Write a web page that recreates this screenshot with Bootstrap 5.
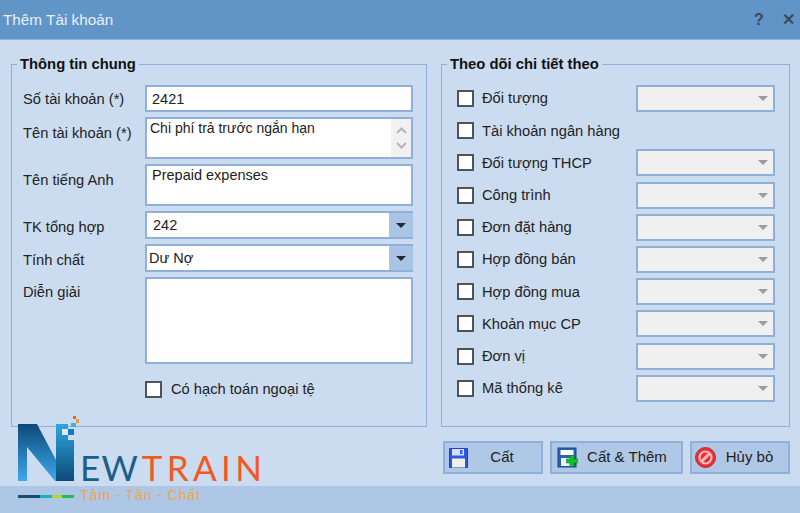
<!DOCTYPE html>
<html lang="vi">
<head>
  <meta charset="UTF-8" />
  <title>Thêm Tài khoản</title>
  <link href="https://cdn.jsdelivr.net/npm/bootstrap@5.3.0/dist/css/bootstrap.min.css" rel="stylesheet">
  <style>
    html, body { height: 100%; }
    body {
      width: 800px; height: 513px; overflow: hidden; margin: 0;
      background: #cbdcf0; color: #222;
      font-family: "Liberation Sans", Arial, sans-serif; font-size: 14.7px;
      position: relative;
    }
    .title-strip { height: 40px; background: #6195c8; border-bottom: 1px solid #8fb3da; color: #e8f0f8; font-size: 15.3px; padding: 1px 0 0 3px; gap: 5px; }
    .title-btn { font-weight: 700; color: #3d4a58; font-size: 16px; width: 24px; text-align: center; }
    .work-area { height: 446px; padding: 13px 10px 0 11px; gap: 14px; }
    .group-box {
      border: 1.5px solid #8fb0d8; margin: 0; padding: 0 11px; height: 374px; min-width: 0;
    }
    .left-box { width: 416px; }
    .right-box { width: 349px; padding: 0 14px 0 15px; }
    .group-box legend {
      float: none; width: auto; margin: 0 0 0 -6px; padding: 0 3px;
      font-size: 14.8px; font-weight: 700; line-height: 22px; color: #111;
    }
    .right-box legend { margin-left: -10px; }
    .field-grid { display: grid; grid-template-columns: 122px 268px; row-gap: 5px; margin-top: 10px; }
    .field-grid label { margin: 0; padding-top: 5px; }
    .field-grid label.first-label { padding-top: 3px; }
    .field-grid label.last-label { padding-top: 4px; }
    .win-input, .win-input:disabled {
      border: 2px solid #8fb0d8; border-radius: 0; padding: 0 5px; height: 27px;
      font-size: 14.5px; color: #222; background: #fff; box-shadow: none; font-family: inherit;
    }
    .win-area { height: 42px; resize: none; padding: 0 5px; line-height: 18px; overflow: hidden; }
    .tall-area { height: 87px; }
    .scroll-wrap { border: 2px solid #8fb0d8; background: #fff; height: 42px; }
    .scroll-wrap textarea { border: 0; flex: 1; height: 38px; padding: 0 3px; font-size: 14px; line-height: 18px; resize: none; outline: 0; color: #222; overflow: hidden; font-family: inherit; }
    .scroll-strip { width: 20px; background: #f1f1f1; }
    .combo-arrow {
      width: 24px; background: #a9c4e4; border: 0; border-radius: 0; padding: 0; justify-content: center;
    }
    .combo-tri { width: 0; height: 0; border-left: 5px solid transparent; border-right: 5px solid transparent; border-top: 5px solid #1c2a3a; }
    .win-combo { height: 28px; border: 2px solid #8fb0d8; border-right: 0; background: #fff; }
    .win-combo input { border: 0; flex: 1; min-width: 0; padding: 2px 6px 0; font-size: 14.5px; color: #222; outline: 0; background: transparent; font-family: inherit; }
    .win-combo input.tight-text { padding: 2px 2px 0; }
    .off-combo { height: 27px; width: 139px; background: #f0f0f0; border-right: 2px solid #8fb0d8; }
    .off-combo .combo-arrow { background: transparent; width: 20px; }
    .off-combo .combo-tri { border-top-color: #9c9c9c; }
    .win-check {
      width: 17px; height: 17px; margin: 0; border: 2px solid #4e5358; border-radius: 0; background: #fff;
      appearance: none; flex: none;
    }
    .ngoai-te { margin: 14px 0 0 122px; gap: 9px; }
    .track-list { margin-top: 10px; row-gap: 5.2px; }
    .track-row { height: 27px; }
    .track-name { margin-left: 8px; flex: 1; }
    .cmd-row { gap: 7px; padding-left: 2px; margin-top: 14px; }
    .cmd-btn {
      height: 33px; background: #aec8e6; border: 2px solid #8fb0d8; border-radius: 0; color: #222;
      font-size: 15px; padding: 0 5px 0 4px; display: flex; align-items: center;
    }
    .cmd-btn:hover { background: #aec8e6; border-color: #8fb0d8; color: #222; }
    .cmd-btn span { flex: 1; text-align: center; }
    .btn-cat, .btn-huy { width: 100px; }
    .btn-huy { padding-left: 3px; }
    .btn-them { width: 133px; padding-left: 5px; }
    .bottom-band { height: 27px; background: #aec7e6; }
    .brand-logo { position: absolute; left: 18px; top: 415px; width: 250px; height: 92px; }
    .brand-word { position: absolute; left: 62px; top: 32px; font-family: "Lato", sans-serif; font-size: 35px; line-height: 40px; letter-spacing: 1.2px; white-space: nowrap; }
    .brand-ew { color: #1b5f8c; }
    .brand-tr { color: #f2591f; margin-left: 3px; letter-spacing: 4.3px; }
    .brand-tag { position: absolute; left: 62px; top: 71px; color: #f0a54a; font-size: 14px; letter-spacing: .9px; line-height: 18px; white-space: nowrap; }
    .brand-rule { position: absolute; left: 0; top: 80px; width: 56px; height: 3px; background: linear-gradient(90deg, #17506f 0 40%, #17b0c0 40% 60%, #b8d62a 60% 78%, #1fc050 78%); }
  </style>
</head>
<body>
  <div class="title-strip d-flex align-items-center">
    <div class="flex-grow-1">Thêm Tài khoản</div>
    <div class="title-btn">?</div>
    <div class="title-btn">✕</div>
  </div>

  <div class="work-area d-flex">
    <fieldset class="group-box left-box">
      <legend>Thông tin chung</legend>
      <div class="field-grid">
        <label class="first-label">Số tài khoản (*)</label>
        <input class="form-control win-input" value="2421">
        <label>Tên tài khoản (*)</label>
        <div class="scroll-wrap d-flex">
          <textarea>Chi phí trả trước ngắn hạn</textarea>
          <div class="scroll-strip d-flex flex-column align-items-center justify-content-around py-1">
            <svg width="11" height="7" viewBox="0 0 11 7"><path d="M1 6 5.5 1.5 10 6" fill="none" stroke="#b5b5b5" stroke-width="2"/></svg>
            <svg width="11" height="7" viewBox="0 0 11 7"><path d="M1 1 5.5 5.5 10 1" fill="none" stroke="#b5b5b5" stroke-width="2"/></svg>
          </div>
        </div>
        <label>Tên tiếng Anh</label>
        <textarea class="form-control win-input win-area">Prepaid expenses</textarea>
        <label>TK tổng hợp</label>
        <div class="input-group win-combo flex-nowrap">
          <input value="242">
          <span class="input-group-text combo-arrow"><i class="combo-tri"></i></span>
        </div>
        <label>Tính chất</label>
        <div class="input-group win-combo flex-nowrap">
          <input class="tight-text" value="Dư Nợ">
          <span class="input-group-text combo-arrow"><i class="combo-tri"></i></span>
        </div>
        <label class="last-label">Diễn giải</label>
        <textarea class="form-control win-input win-area tall-area"></textarea>
      </div>
      <div class="d-flex align-items-center ngoai-te">
        <input type="checkbox" class="win-check">
        <span>Có hạch toán ngoại tệ</span>
      </div>
    </fieldset>

    <div>
      <fieldset class="group-box right-box">
        <legend>Theo dõi chi tiết theo</legend>
        <div class="d-grid track-list" id="trackList"></div>
      </fieldset>
      <div class="d-flex cmd-row">
        <button class="btn cmd-btn btn-cat">
          <svg width="19" height="20" viewBox="0 0 19 20"><path d="M.5.5h18v19H.5z" fill="#2f55e8" stroke="#2140c8"/><rect x="3" y="1" width="12" height="6.500" fill="#d5def5"/><rect x="11" y="2" width="2.500" height="4" fill="#3a5fe6"/><rect x="3" y="10.500" width="13" height="9" fill="#f1efe6"/></svg>
          <span>Cất</span>
        </button>
        <button class="btn cmd-btn btn-them">
          <svg width="21" height="21" viewBox="0 0 21 21"><rect x="1" y="1" width="18" height="19" fill="#2b62b4" stroke="#1d4286"/><rect x="3.500" y="3" width="13" height="5" fill="#fff"/><rect x="4" y="11" width="9" height="8" fill="#eef0f6"/><path d="M13 8.500h4v3.500h3.500v4H17v3.500h-4V16H9.500v-4H13z" fill="#14c12a" stroke="#0b8a1a" stroke-width=".6"/></svg>
          <span>Cất &amp; Thêm</span>
        </button>
        <button class="btn cmd-btn btn-huy">
          <svg width="21" height="21" viewBox="0 0 21 21"><circle cx="10.500" cy="10.500" r="10" fill="#ea2f36" stroke="#c9262d"/><circle cx="10.500" cy="10.500" r="6" fill="none" stroke="#f6bcbc" stroke-width="2.200"/><path d="M6.200 14.800 14.800 6.200" stroke="#f6bcbc" stroke-width="3"/></svg>
          <span>Hủy bỏ</span>
        </button>
      </div>
    </div>
  </div>

  <div class="bottom-band"></div>

  <div class="brand-logo">
    <svg width="62" height="68" viewBox="0 0 62 68" class="position-absolute top-0 start-0">
      <defs>
        <linearGradient id="nLeft" x1="0" y1="0" x2="0" y2="1"><stop offset="0" stop-color="#0c4a76"/><stop offset="1" stop-color="#3ea8f0"/></linearGradient>
        <linearGradient id="nRight" x1="0" y1="0" x2="0" y2="1"><stop offset="0" stop-color="#2ea6e0"/><stop offset="1" stop-color="#0b4a78"/></linearGradient>
      </defs>
      <path d="M0 9H19L38 45V66H37L9 32V66H0Z" fill="url(#nLeft)"/>
      <path d="M38 9H50V14H44V20H50V25H56V66H38Z" fill="url(#nRight)"/>
      <rect x="44" y="14" width="6" height="6" fill="#dfeaf6"/>
      <rect x="50" y="14" width="6" height="6" fill="#1676c8"/>
      <rect x="53" y="8" width="5" height="4" fill="#3fb0e0"/>
      <rect x="58" y="4" width="3" height="4" fill="#f59a26"/>
      <rect x="55" y="1" width="3" height="3" fill="#e2603c"/>
    </svg>
    <div class="brand-word"><span class="brand-ew">EW</span><span class="brand-tr">TRAIN</span></div>
    <div class="brand-rule"></div>
    <div class="brand-tag">Tâm - Tân - Chất</div>
  </div>

  <script src="https://cdn.jsdelivr.net/npm/bootstrap@5.3.0/dist/js/bootstrap.bundle.min.js"></script>
  <script>
    const items = ["Đối tượng", "Tài khoản ngân hàng", "Đối tượng THCP", "Công trình", "Đơn đặt hàng",
      "Hợp đồng bán", "Hợp đồng mua", "Khoản mục CP", "Đơn vị", "Mã thống kê"];
    document.getElementById("trackList").innerHTML = items.map((name, i) => `
      <div class="d-flex align-items-center track-row">
        <input type="checkbox" class="win-check">
        <span class="track-name">${name}</span>
        ${i === 1 ? "" : `<div class="input-group win-combo off-combo flex-nowrap"><input disabled><span class="input-group-text combo-arrow"><i class="combo-tri"></i></span></div>`}
      </div>`).join("");
  </script>
</body>
</html>
